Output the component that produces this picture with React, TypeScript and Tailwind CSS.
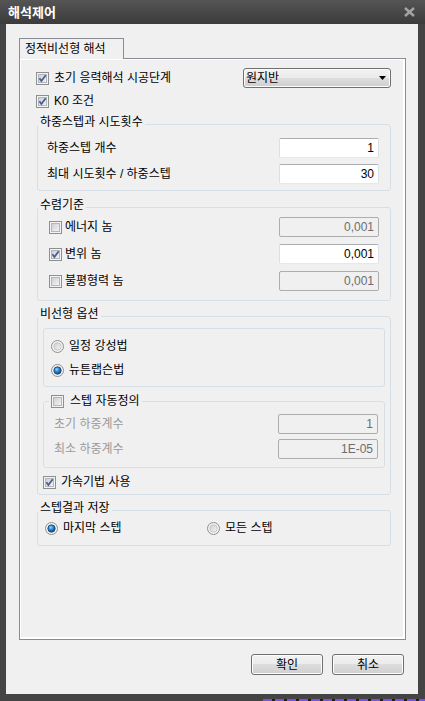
import type { ReactNode } from 'react'

function CheckBox({ checked = false }: { checked?: boolean }) {
  return (
    <svg width="13" height="13" viewBox="0 0 13 13" className="shrink-0">
      <defs>
        <linearGradient id="cbInner" x1="0" y1="0" x2="1" y2="1">
          <stop offset="0" stopColor="#c9cdd3" />
          <stop offset="1" stopColor="#f6f6f6" />
        </linearGradient>
      </defs>
      <rect x="0.5" y="0.5" width="12" height="12" fill="#f4f4f4" stroke="#8e8f8f" />
      <rect x="2.5" y="2.5" width="8" height="8" fill="url(#cbInner)" stroke="#b3b7bc" />
      {checked && (
        <path d="M3.4 6.3 L5.4 9 L9.7 3.2" fill="none" stroke="#4b5f95" strokeWidth="1.8" />
      )}
    </svg>
  )
}

function Radio({ checked = false }: { checked?: boolean }) {
  return (
    <svg width="13" height="13" viewBox="0 0 13 13" className="shrink-0">
      <defs>
        <radialGradient id="rdOn" cx="0.4" cy="0.35" r="0.7">
          <stop offset="0" stopColor="#9ad8ff" />
          <stop offset="0.45" stopColor="#2b87d0" />
          <stop offset="1" stopColor="#0d3f7c" />
        </radialGradient>
        <linearGradient id="rdOff" x1="0" y1="0" x2="1" y2="1">
          <stop offset="0" stopColor="#cfcfcf" />
          <stop offset="1" stopColor="#f5f5f5" />
        </linearGradient>
      </defs>
      <circle cx="6.5" cy="6.5" r="6" fill="#f3f3f3" stroke="#8e8f8f" />
      <circle
        cx="6.5"
        cy="6.5"
        r="3.7"
        fill={checked ? 'url(#rdOn)' : 'url(#rdOff)'}
        stroke={checked ? '#183f70' : '#bdbdbd'}
        strokeWidth="0.8"
      />
    </svg>
  )
}

function Field({ value, disabled = false }: { value: string; disabled?: boolean }) {
  return (
    <div
      className={`flex h-[20px] w-[100px] items-center justify-end rounded-[2px] border pr-[4px] ${
        disabled
          ? 'border-[#adadad] bg-[#f0f0f0] text-[#6d6d6d]'
          : 'border-[#dbdfe6] border-t-[#abadb3] border-b-[#e3e9ef] bg-white text-black'
      }`}
    >
      {value}
    </div>
  )
}

function Group({ title, children }: { title: ReactNode; children: ReactNode }) {
  return (
    <fieldset className="w-[354px] rounded-[3px] border border-[#d5dfe5]">
      <legend className="h-[16px] px-[2px] leading-[12px]">{title}</legend>
      {children}
    </fieldset>
  )
}

function Row({ label, value, disabled }: { label: ReactNode; value: string; disabled?: boolean }) {
  return (
    <div className="flex h-[20px] items-center justify-between">
      {label}
      <Field value={value} disabled={disabled} />
    </div>
  )
}

const btn =
  'flex h-[21px] w-[72px] items-center justify-center rounded-[3px] border border-[#707070] bg-[linear-gradient(#f2f2f2,#ebebeb_50%,#dddddd_50%,#cfcfcf)] shadow-[inset_0_0_0_1px_#fcfcfc]'

export default function App() {
  return (
    <div className="flex h-[701px] w-[425px] flex-col bg-[#444444] font-['Liberation_Sans','Noto_Sans_CJK_KR',sans-serif] text-[12px] text-black">
      {/* title bar */}
      <div className="flex h-[24px] shrink-0 items-center justify-between bg-gradient-to-b from-[#555555] to-[#3b3b3b] pl-[8px] pr-[10px]">
        <span className="text-[13px] font-bold leading-none text-white">해석제어</span>
        <svg width="11" height="10" viewBox="0 0 11 10">
          <path d="M1 1 L10 9 M10 1 L1 9" stroke="#a3a3a3" strokeWidth="2.4" />
        </svg>
      </div>

      {/* client area */}
      <div className="ml-[6px] flex h-[670px] w-[412px] flex-col bg-[#f0f0f0] pl-[13px] pt-[14px]">
        <div className="relative z-10 -mb-px flex h-[21px] w-[105px] items-center border border-b-0 border-[#898c95] bg-[#f0f0f0] pl-[5px] leading-none">
          정적비선형 해석
        </div>

        <div className="h-[582px] w-[387px] border border-[#898c95] pl-[17px] pt-[9px] shadow-[inset_-2px_-2px_0_#ffffff,inset_1px_1px_0_#ffffff]">
          <div className="flex w-[354px] flex-col">
            <div className="flex h-[20px] items-center">
              <div className="-ml-px flex items-center gap-[5px]">
                <CheckBox checked />
                <span>초기 응력해석 시공단계</span>
              </div>
              <div className="ml-auto flex h-[20px] w-[148px] items-center justify-between rounded-[3px] border border-[#707070] bg-[linear-gradient(#f2f2f2,#ebebeb_50%,#dddddd_50%,#cfcfcf)] pl-[2px] pr-[4px] shadow-[inset_0_0_0_1px_#fcfcfc]">
                <span>원지반</span>
                <svg width="7" height="4" viewBox="0 0 7 4">
                  <path d="M0 0 H7 L3.5 4 Z" fill="#000" />
                </svg>
              </div>
            </div>

            <div className="-ml-px mt-[4px] flex h-[18px] items-center gap-[5px]">
              <CheckBox checked />
              <span>K0 조건</span>
            </div>

            <div className="mt-[6px]">
              <Group title="하중스텝과 시도횟수">
                <div className="flex flex-col gap-[6px] pb-[6px] pl-[9px] pr-[11px] pt-[6px]">
                  <Row label={<span>하중스텝 개수</span>} value="1" />
                  <Row label={<span>최대 시도횟수 / 하중스텝</span>} value="30" />
                </div>
              </Group>
            </div>

            <div className="mt-[8px]">
              <Group title="수렴기준">
                <div className="flex flex-col gap-[7px] pb-[9px] pl-[11px] pr-[11px] pt-[2px]">
                  <Row
                    label={
                      <div className="flex items-center gap-[3px]">
                        <CheckBox />
                        <span>에너지 놈</span>
                      </div>
                    }
                    value="0,001"
                    disabled
                  />
                  <Row
                    label={
                      <div className="flex items-center gap-[3px]">
                        <CheckBox checked />
                        <span>변위 놈</span>
                      </div>
                    }
                    value="0,001"
                  />
                  <Row
                    label={
                      <div className="flex items-center gap-[3px]">
                        <CheckBox />
                        <span>불평형력 놈</span>
                      </div>
                    }
                    value="0,001"
                    disabled
                  />
                </div>
              </Group>
            </div>

            <div className="mt-[7px]">
              <Group title="비선형 옵션">
                <div className="flex flex-col px-[5px] pb-[3px]">
                  <div className="mt-[4px] flex flex-col gap-[4px] rounded-[3px] border border-[#d5dfe5] pb-[6px] pl-[7px] pt-[7px]">
                    <div className="flex h-[20px] items-center gap-[5px]">
                      <Radio />
                      <span>일정 강성법</span>
                    </div>
                    <div className="flex h-[20px] items-center gap-[5px]">
                      <Radio checked />
                      <span>뉴튼랩슨법</span>
                    </div>
                  </div>

                  <fieldset className="mt-[6px] w-[342px] rounded-[3px] border border-[#d5dfe5]">
                    <legend className="ml-[5px] flex h-[16px] items-center gap-[6px] px-[2px]">
                      <CheckBox />
                      <span>스텝 자동정의</span>
                    </legend>
                    <div className="flex flex-col gap-[5px] pb-[8px] pl-[10px] pr-[6px] pt-[5px]">
                      <Row label={<span className="text-[#9a9a9a]">초기 하중계수</span>} value="1" disabled />
                      <Row label={<span className="text-[#9a9a9a]">최소 하중계수</span>} value="1E-05" disabled />
                    </div>
                  </fieldset>

                  <div className="mt-[5px] flex h-[18px] items-center gap-[5px]">
                    <CheckBox checked />
                    <span>가속기법 사용</span>
                  </div>
                </div>
              </Group>
            </div>

            <div className="mt-[7px]">
              <Group title="스텝결과 저장">
                <div className="flex h-[20px] items-center pl-[7px]">
                  <div className="flex w-[162px] items-center gap-[5px]">
                    <Radio checked />
                    <span>마지막 스텝</span>
                  </div>
                  <div className="flex items-center gap-[5px]">
                    <Radio />
                    <span>모든 스텝</span>
                  </div>
                </div>
                <div className="h-[7px]" />
              </Group>
            </div>
          </div>
        </div>

        <div className="mt-[14px] flex w-[385px] justify-end gap-[9px]">
          <button type="button" className={btn}>확인</button>
          <button type="button" className={btn}>취소</button>
        </div>
      </div>

      <div className="mt-auto flex h-[2px] justify-end">
        <div className="w-[162px] bg-[repeating-linear-gradient(90deg,#7b52e0_0_9px,#1d1d1d_9px_12px)]" />
      </div>
    </div>
  )
}
